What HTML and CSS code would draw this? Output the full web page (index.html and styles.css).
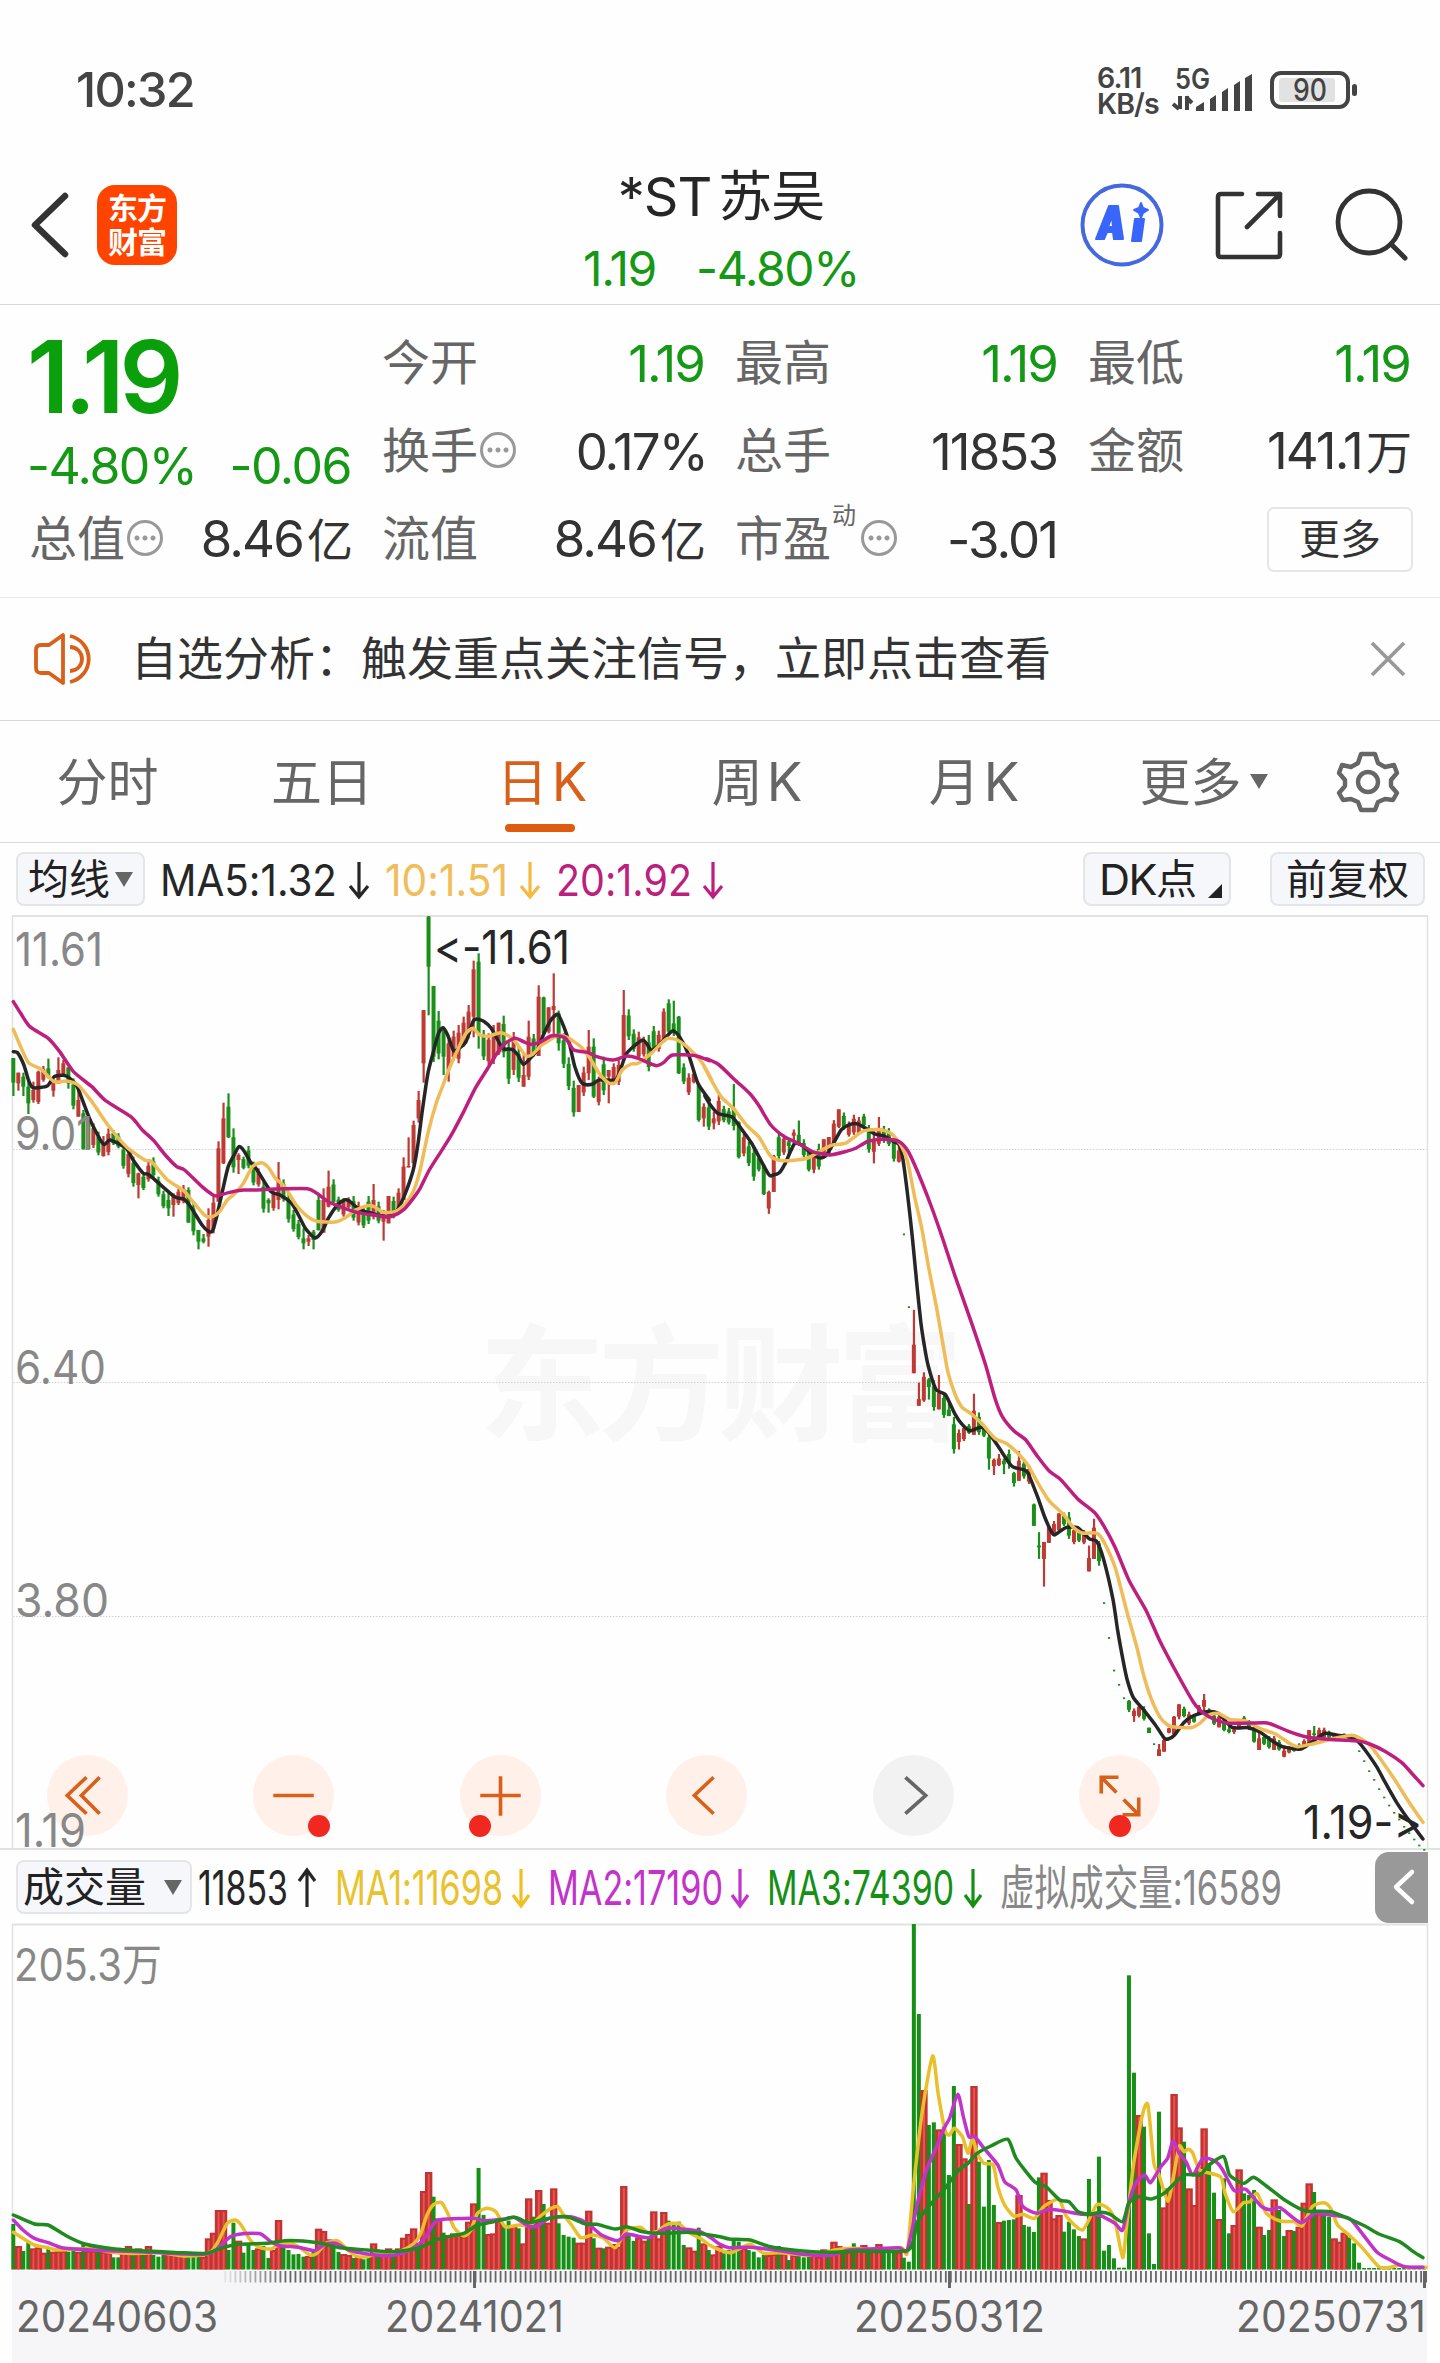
FILE: index.html
```html
<!DOCTYPE html>
<html lang="zh-CN">
<head>
<meta charset="utf-8">
<title>*ST苏吴 日K</title>
<link rel="stylesheet" href="styles.css">
</head>
<body>
<header class="status">
  <span class="clock">10:32</span>
  <div class="status-right">
    <div class="speed"><span>6.11</span><span>KB/s</span></div>
    <svg class="signal" width="82" height="60" viewBox="0 0 82 60">
      <text class="net" x="3" y="21" textLength="35" lengthAdjust="spacingAndGlyphs">5G</text>
      <path d="M8 28v13M1 36l6 5M15 42V28M14 29l6 6" fill="none" stroke="#444" stroke-width="4"/>
      <path d="M24 43v-4l8-5v9zM38 43V31l6-4v16zM50 43V24l6-4v23zM62 43V17l6-4v30zM73 43V10l7-4v37z" fill="#444"/>
    </svg>
    <svg class="battery" width="90" height="40" viewBox="0 0 90 40">
      <rect x="2" y="2" width="76" height="34" rx="9" fill="none" stroke="#444" stroke-width="4"/>
      <rect x="9" y="7" width="56" height="24" rx="3" fill="#e2e2e2"/>
      <rect x="82" y="13" width="5" height="12" rx="2.5" fill="#444"/>
      <text x="23" y="30" textLength="34" lengthAdjust="spacingAndGlyphs">90</text>
    </svg>
  </div>
</header>

<nav class="topbar">
  <div class="topbar-left">
    <svg width="40" height="68" viewBox="0 0 40 68"><path d="M35 5L5 34l30 29" fill="none" stroke="#333" stroke-width="6.5" stroke-linecap="round" stroke-linejoin="round"/></svg>
    <div class="logo"><span>东方</span><span>财富</span></div>
  </div>
  <div class="title">
    <h1><span>*ST</span><span>苏吴</span></h1>
    <p><span>1.19</span><span>-4.80%</span></p>
  </div>
  <div class="topbar-right">
    <svg width="86" height="86" viewBox="0 0 86 86">
      <circle cx="43" cy="43" r="39.5" fill="none" stroke="#4468e0" stroke-width="4"/>
      <path fill="#3966fa" stroke="#3966fa" stroke-width="2" stroke-linejoin="round" fill-rule="evenodd" d="M30 24h9l5 33h-9l-1-7h-6l-3 7h-8zM33 34l-4 11h5zM56 37h9l-3 22h-9zM62 21l2 5 5 2-5 3-2 5-2-5-5-3 5-2z"/>
    </svg>
    <svg width="72" height="72" viewBox="0 0 72 72"><path d="M29 5H8q-3 0-3 3v57q0 3 3 3h56q3 0 3-3V44M45 5h22v22M67 5L34 38" fill="none" stroke="#333" stroke-width="4.6" stroke-linecap="round" stroke-linejoin="round"/></svg>
    <svg width="76" height="76" viewBox="0 0 76 76"><circle cx="35" cy="35" r="31" fill="none" stroke="#333" stroke-width="4.8"/><path d="M57 57l14 14" stroke="#333" stroke-width="5" stroke-linecap="round"/></svg>
  </div>
</nav>

<section class="quote">
  <div class="price">1.19</div>
  <div class="change"><span>-4.80%</span><span>-0.06</span></div>
  <div class="cell cap"><span class="label">总值<i class="dots"></i></span><b>8.46<em>亿</em></b></div>
  <div class="cell c2 r1"><span class="label">今开</span><b class="down">1.19</b></div>
  <div class="cell c3 r1"><span class="label">最高</span><b class="down">1.19</b></div>
  <div class="cell c4 r1"><span class="label">最低</span><b class="down">1.19</b></div>
  <div class="cell c2 r2"><span class="label">换手<i class="dots"></i></span><b class="rate">0.17%</b></div>
  <div class="cell c3 r2"><span class="label">总手</span><b>11853</b></div>
  <div class="cell c4 r2"><span class="label">金额</span><b>141.1<em>万</em></b></div>
  <div class="cell c2 r3"><span class="label">流值</span><b>8.46<em>亿</em></b></div>
  <div class="cell c3 r3"><span class="label">市盈<sup>动</sup><i class="dots"></i></span><b>-3.01</b></div>
  <button class="more">更多</button>
</section>

<section class="notice">
  <svg width="64" height="54" viewBox="0 0 64 54"><path d="M3 18q0-5 5-5h8L30 3v48L16 41H8q-5 0-5-5zM37 4a23.5 23.5 0 0 1 0 46M37 15a12 12 0 0 1 0 24" fill="none" stroke="#d9601a" stroke-width="3.8" stroke-linejoin="round"/></svg>
  <p>自选分析：触发重点关注信号，立即点击查看</p>
  <svg width="36" height="36" viewBox="0 0 36 36"><path d="M2 2l32 32M34 2L2 34" stroke="#999" stroke-width="3.8"/></svg>
</section>

<nav class="tabs">
  <a><em>分时</em></a><a><em>五日</em></a><a class="active"><em>日</em><span>K</span></a><a><em>周</em><span>K</span></a><a><em>月</em><span>K</span></a>
  <a class="tab-more"><em>更多</em><i class="tri"></i></a>
  <svg width="64" height="64" viewBox="-32 -32 64 64"><path d="M-7-28H7L10-19L17-15L26-17L29-9L23-2V4L29 11L25 18L17 17L10 20L7 28H-7L-10 20L-17 17L-25 18L-29 11L-23 4V-2L-29-9L-26-17L-17-15L-10-19Z" fill="none" stroke="#666" stroke-width="4.4" stroke-linejoin="round"/><circle r="10" fill="none" stroke="#666" stroke-width="4.4"/></svg>
</nav>

<section class="legend ma">
  <button class="chip chip-ma">均线<i class="tri"></i></button>
  <svg width="225" height="54" viewBox="0 0 225 54"><text x="0" y="44" textLength="177" lengthAdjust="spacingAndGlyphs">MA5:1.32</text><path d="M199 10v34m-9-10l9 11 9-11"/></svg>
  <svg class="gold" width="171" height="54" viewBox="0 0 171 54"><text x="0" y="44" textLength="123" lengthAdjust="spacingAndGlyphs">10:1.51</text><path d="M145 10v34m-9-10l9 11 9-11"/></svg>
  <svg class="pink" width="180" height="54" viewBox="0 0 180 54"><text x="0" y="44" textLength="136" lengthAdjust="spacingAndGlyphs">20:1.92</text><path d="M157 10v34m-9-10l9 11 9-11"/></svg>
  <button class="chip chip-dk"><span>DK</span>点<i class="corner"></i></button>
  <button class="chip chip-fq">前复权</button>
</section>

<section class="price-chart">
  <svg width="1440" height="935" viewBox="0 915 1440 935">
    <text class="watermark" x="479" y="1431" textLength="484">东方财富</text>
    <path class="grid" d="M13 1149.5H1427M13 1382.5H1427M13 1616.5H1427"/>
    <path class="side" d="M12.5 915V1850M1427.5 915V1850"/>
    <path class="frame" d="M12 916H1428"/>
    <g id="candles"></g>
    <g id="averages" class="lines"></g>
    <g class="axis">
      <text x="15" y="966" textLength="88" lengthAdjust="spacingAndGlyphs">11.61</text>
      <text x="15" y="1150" textLength="78" lengthAdjust="spacingAndGlyphs">9.01</text>
      <text x="15" y="1384" textLength="91" lengthAdjust="spacingAndGlyphs">6.40</text>
      <text x="15" y="1617" textLength="94" lengthAdjust="spacingAndGlyphs">3.80</text>
    </g>
    <g class="mark">
      <text x="434" y="964" textLength="136" lengthAdjust="spacingAndGlyphs">&lt;-11.61</text>
      <text x="1303" y="1839" textLength="119" lengthAdjust="spacingAndGlyphs">1.19-&gt;</text>
    </g>
  </svg>
  <div class="controls">
    <button><svg viewBox="-40 -40 80 80"><path d="M-1-18L-20 0L-1 18M12-18L-6 0L12 18"/></svg></button>
    <button class="dot-right"><svg viewBox="-40 -40 80 80"><path d="M-20 0H20"/></svg></button>
    <button class="dot-left"><svg viewBox="-40 -40 80 80"><path d="M-20 0H20M0-19V20"/></svg></button>
    <button><svg viewBox="-40 -40 80 80"><path d="M7-18L-12 0L7 18"/></svg></button>
    <button class="muted"><svg viewBox="-40 -40 80 80"><path d="M-8-18L12 0L-8 18"/></svg></button>
    <button class="dot-mid"><svg viewBox="-40 -40 80 80"><path d="M-1-18H-18V-2M-18-18L-3-3M3 19H19V2M19 19L4 4"/></svg></button>
  </div>
  <svg class="low-label" width="80" height="44" viewBox="0 0 80 44"><text x="0" y="40" textLength="71" lengthAdjust="spacingAndGlyphs">1.19</text></svg>
</section>

<section class="legend vol">
  <button class="chip chip-vol">成交量<i class="tri"></i></button>
  <svg width="137" height="54" viewBox="0 0 137 54"><text x="0" y="45" textLength="90" lengthAdjust="spacingAndGlyphs">11853</text><path d="M109 47V10m-8 11l8-11 8 11"/></svg>
  <svg class="yellow" width="214" height="54" viewBox="0 0 214 54"><text x="0" y="45" textLength="168" lengthAdjust="spacingAndGlyphs">MA1:11698</text><path d="M186 9v37m-8-11l8 11 8-11"/></svg>
  <svg class="violet" width="219" height="54" viewBox="0 0 219 54"><text x="-1" y="45" textLength="175" lengthAdjust="spacingAndGlyphs">MA2:17190</text><path d="M191 9v37m-8-11l8 11 8-11"/></svg>
  <svg class="green" width="232" height="54" viewBox="0 0 232 54"><text x="-1" y="45" textLength="187" lengthAdjust="spacingAndGlyphs">MA3:74390</text><path d="M205 9v37m-8-11l8 11 8-11"/></svg>
  <svg class="grey" width="285" height="54" viewBox="0 0 285 54"><text x="0" y="45" textLength="282" lengthAdjust="spacingAndGlyphs">虚拟成交量:16589</text></svg>
  <button class="handle"><svg width="24" height="36" viewBox="0 0 24 36"><path d="M20 3L4 18l16 15" fill="none" stroke="#fff" stroke-width="4.5" stroke-linecap="round" stroke-linejoin="round"/></svg></button>
</section>

<section class="volume-chart">
  <svg width="1440" height="347" viewBox="0 1924 1440 347">
    <path class="side" d="M12.5 1924V2270M1427.5 1924V2270"/>
    <path class="frame" d="M12 1924.5H1428"/>
    <g id="volumes"></g>
    <g id="volume-averages" class="lines"></g>
    <g class="axis small"><text x="14" y="1981" textLength="148" lengthAdjust="spacingAndGlyphs">205.3万</text></g>
  </svg>
</section>

<footer class="dates">
  <svg width="1415" height="92" viewBox="12 2271 1415 92">
    <g id="ticks"></g>
    <path d="M474.5 2271v17M949.5 2271v17M1424.5 2271v17" stroke="#666" stroke-width="3"/>
    <text x="16" y="2332" textLength="202" lengthAdjust="spacingAndGlyphs">20240603</text>
    <text x="385" y="2332" textLength="179" lengthAdjust="spacingAndGlyphs">20241021</text>
    <text x="854" y="2332" textLength="191" lengthAdjust="spacingAndGlyphs">20250312</text>
    <text x="1236" y="2332" textLength="190" lengthAdjust="spacingAndGlyphs">20250731</text>
  </svg>
</footer>
<script src="chart.js"></script>
</body>
</html>
```

FILE: styles.css
```css
* { box-sizing: border-box; }
body {
  margin: 0;
  width: 1440px;
  height: 2363px;
  overflow: hidden;
  background: #fefefe;
  color: #333;
  font-family: Inter, "Noto Sans CJK SC", sans-serif;
  font-weight: 400;
  font-feature-settings: "calt" 0;
}
svg { display: block; flex: none; overflow: visible; }
button { font: inherit; color: inherit; border: 0; padding: 0; background: none; }
h1, p { margin: 0; font-weight: 400; }
i, em, b { font-style: normal; font-weight: 400; }

.status { height: 140px; display: flex; justify-content: space-between; padding: 60px 80px 0 76px; color: #444; }
.clock { font-size: 48.5px; line-height: 60px; letter-spacing: -1.7px; font-weight: 500; }
.status-right { display: flex; }
.speed { display: flex; flex-direction: column; width: 75px; padding-top: 5px; font-size: 28.5px; font-weight: 600; line-height: 25.5px; letter-spacing: -.9px; }
.signal { height: 60px; margin-top: 8px; margin-right: 16px; }
.net { font-size: 28px; font-weight: 600; fill: #444; }
.battery { margin-top: 11px; }
.battery text { font-size: 31px; font-weight: 500; fill: #444; }

.topbar { height: 165px; display: grid; grid-template-columns: 1fr auto 1fr; border-bottom: 1px solid #d8d8d8; }
.topbar-left { display: flex; align-items: center; gap: 27px; padding: 6px 0 0 30px; }
.logo { width: 80px; height: 80px; border-radius: 18px; background: #ff4400; color: #fff; display: flex; flex-direction: column; align-items: center; justify-content: center; font-size: 30px; line-height: 34px; font-weight: 700; letter-spacing: -1px; }
.title { display: flex; flex-direction: column; align-items: center; padding: 22px 0 0 2px; }
.title h1 { display: flex; gap: 7px; font-size: 54px; line-height: 70px; letter-spacing: -1px; color: #262626; }
.title p { display: flex; gap: 40px; font-size: 48px; line-height: 60px; margin-top: 7px; letter-spacing: -1.4px; color: #159815; }
.topbar-right { display: flex; align-items: center; justify-content: flex-end; padding: 5px 30px 0 0; }
.topbar-right svg:nth-child(2) { margin-left: 48px; }
.topbar-right svg:nth-child(3) { margin-left: 49px; }

.quote { height: 293px; display: grid; grid-template-columns: 321px 321px 321px 321px; grid-template-rows: 88px 88px 88px; column-gap: 32px; padding: 14px 0 0 30px; border-bottom: 1px solid #e9e9e9; }
.price { grid-area: 1 / 1; margin-left: -3px; font-size: 100px; line-height: 116px; font-weight: 600; letter-spacing: -5px; color: #0b9f0b; }
.change { grid-area: 2 / 1; display: flex; justify-content: space-between; align-items: center; margin-left: -3px; font-size: 50px; letter-spacing: -1.5px; color: #159815; padding-top: 30px; }
.cell { display: flex; justify-content: space-between; align-items: center; white-space: nowrap; }
.cell b { font-size: 51px; line-height: 60px; letter-spacing: -1.9px; padding-top: 1px; }
.cell em { font-size: 46px; margin-left: 4px; }
.cell .rate { margin-right: -3px; }
.cell .down { color: #159815; }
.label { display: flex; align-items: center; font-size: 48px; line-height: 60px; color: #666; margin-top: -1px; margin-left: -1px; }
.label sup { align-self: flex-start; font-size: 24px; line-height: 24px; width: 27px; margin-left: 1px; margin-top: -5px; }
.dots { width: 36px; height: 36px; margin: -2px 0 0 2px; border: 3px solid #999; border-radius: 50%; background: radial-gradient(circle at 7px 15px, #999 2px, transparent 3px), radial-gradient(circle at 15px 15px, #999 2px, transparent 3px), radial-gradient(circle at 23px 15px, #999 2px, transparent 3px); }
.cap { grid-area: 3 / 1; }
.r1 { grid-row: 1; } .r2 { grid-row: 2; } .r3 { grid-row: 3; }
.c2 { grid-column: 2; } .c3 { grid-column: 3; } .c4 { grid-column: 4; }
.more { grid-area: 3 / 4; justify-self: end; align-self: center; margin-right: -3px; width: 146px; height: 65px; border: 2px solid #e6e6e6; border-radius: 7px; font-size: 41px; line-height: 58px; color: #333; }

.notice { height: 123px; display: flex; align-items: center; padding: 0 34px 0 33px; border-bottom: 1px solid #d8d8d8; }
.notice p { flex: 1; margin: -2px 0 0 34px; font-size: 46px; line-height: 60px; }

.tabs { height: 122px; display: grid; grid-template-columns: 215px 214px 226px 204px 230px 229px 122px; align-items: center; border-bottom: 1px solid #d8d8d8; font-size: 51px; color: #666; }
.tabs a { position: relative; display: flex; justify-content: center; align-items: center; height: 121px; white-space: nowrap; }
.tabs em { margin-top: -5px; }
.tabs a span { margin-left: 4px; font-size: 53px; }
.tabs .active { color: #d9601a; }
.tabs .active::after { content: ""; position: absolute; left: 76px; bottom: 10px; width: 70px; height: 8px; border-radius: 4px; background: #de5c10; }
.tri { width: 0; height: 0; border: 9px solid transparent; border-top: 15px solid #666; border-bottom: 0; }
.tab-more .tri { margin-left: 8px; }
.tabs svg { margin-left: 18px; }

.legend { display: flex; align-items: center; }
.legend svg text { font-size: 43.5px; fill: #262626; }
.legend svg path { fill: none; stroke: #262626; stroke-width: 3.2; }
.chip { height: 54px; display: flex; align-items: center; background: #f6f7fa; border: 2px solid #e4e5e8; border-radius: 8px; font-size: 41px; line-height: 48px; color: #222; white-space: nowrap; }
.ma { height: 72px; padding-left: 16px; }
.chip-ma { width: 129px; padding-left: 10px; margin-right: 15px; }
.chip .tri { margin-left: 5px; }
.chip-dk { width: 148px; margin-left: auto; padding-left: 14px; }
.chip-dk span { font-size: 43px; letter-spacing: -1.5px; }
.corner { margin-left: 11px; margin-top: 24px; border-left: 14px solid transparent; border-bottom: 14px solid #222; }
.chip-fq { width: 155px; margin-left: 39px; margin-right: 15px; padding-left: 14px; }
.legend .gold text { fill: #f0bd58; } .legend .gold path { stroke: #f5b942; }
.legend .pink text { fill: #bd1f7e; } .legend .pink path { stroke: #bd1f7e; }

.price-chart { position: relative; height: 935px; border-bottom: 2px solid #e2e2e2; }
.grid { stroke: #d2d2d2; stroke-width: 1; stroke-dasharray: 1.5 1.5; }
.side { stroke: #e2e2e2; stroke-width: 1.5; }
.frame { stroke: #e2e2e2; stroke-width: 2; }
.watermark { font-family: "Noto Sans CJK SC", sans-serif; font-size: 126px; font-weight: 700; fill: #f7f7f7; }
.axis text, .low-label text { font-size: 47px; fill: #888; }
.axis.small text { font-size: 44.5px; }
.mark text { font-size: 47px; fill: #262626; }
.lines path { fill: none; stroke-width: 3.5; stroke-linejoin: round; stroke-linecap: round; }
.controls { position: absolute; left: 47px; top: 840px; display: flex; gap: 125.4px; }
.controls button { position: relative; width: 81px; height: 81px; border-radius: 50%; background: #fff1e9; }
.controls svg { width: 81px; height: 81px; fill: none; stroke: #d9601a; stroke-width: 3.6; }
.controls .muted { background: #f2f2f2; }
.controls .muted svg { stroke: #666; }
.controls [class^="dot"]::after { content: ""; position: absolute; width: 22px; height: 22px; border-radius: 50%; background: #f02820; top: 60px; }
.controls .dot-right::after { left: 55px; }
.controls .dot-left::after { left: 9px; }
.controls .dot-mid::after { left: 30px; }
.low-label { position: absolute; left: 15px; top: 892px; }

.vol { height: 74px; padding-left: 16px; }
.vol svg text { font-size: 47.5px; }
.chip-vol { width: 176px; padding-left: 5px; margin-right: 6px; }
.chip-vol .tri { margin-left: 18px; }
.legend .yellow text { fill: #e9c22f; } .legend .yellow path { stroke: #f0c020; }
.legend .violet text { fill: #c233ca; } .legend .violet path { stroke: #c233ca; }
.legend .green text { fill: #159015; } .legend .green path { stroke: #159015; }
.legend .grey text { fill: #888; }
.handle { margin-left: auto; margin-right: 12px; width: 53px; height: 71px; border-radius: 14px 0 0 14px; background: #999; display: flex; align-items: center; padding-left: 17px; }
.legend .handle svg path { stroke: #fff; stroke-width: 4.5; }

.volume-chart { height: 347px; }
.dates { height: 92px; margin: 0 13px 0 12px; background: #f6f6f9; }
.dates text { font-size: 43.5px; fill: #666; }
```

FILE: chart.js
```js
const NS = 'http://www.w3.org/2000/svg';
const RED = '#be3a34', GREEN = '#1a8f1a';
const barX = i => 13.3 + 5.003 * i;

function add(parent, tag, attrs) {
  const el = document.createElementNS(NS, tag);
  for (const k in attrs) el.setAttribute(k, attrs[k]);
  document.getElementById(parent).appendChild(el);
}

// Scales: stored value -> chart units.
const A = { x: 0, y: 900, kx: 2.178, ky: 3 };
const B = { x: 700, y: 1050, kx: 2.119, ky: 2.24 };
const C = { x: 720, y: 1660, kx: 2.178, ky: 3 };
const V1 = { x: 0, y: 2100, kx: 2.178, ky: 3 };
const V2 = { x: 720, y: 1900, kx: 2.178, ky: 3 };

// Daily bars: direction, high-low, optional body range.
const days = [
  [A, `g474-588:474-548 r518-572:518-550 g518-588:530-560 g540-642:560-610 r545-608:570-600 r512-612:515-606 r498-545 g476-535:505-532 r530-590:540-572 r472-552:510-550 r480-528:490-525 g502-566:502-550
  g535-628 r560-650:600-650 g630-748:640-748 g650-748:660-748 r670-744 g695-766 r708-770:730-768 r685-766 g690-735 g700-745 g735-806 r745-832 g770-860 r818-895:820-855 g820-870 r785-845 g772-832 g830-890
  g872-925 g875-948:900-925 r880-950:885-915 r865-915 r855-910 g862-968:870-968 g905-1006 g990-1048:990-1025 g1002-1030:1015-1025 r925-1040:960-1010 r885-1000 r724-905:745-905 r608-792:655-790 g580-714:620-712 g685-818 r760-822:765-780 g770-808 g738-805 g785-856 r805-860
  g840-938 g895-938:900-910 r865-932 r786-928:835-900 g838-905 g880-968 g930-995 g960-1018 g985-1048:1015-1030 r1005-1038:1015-1025 g990-1048:995-1020 g880-992:900-990 r865-998:900-998 r812-922:860-920 g838-915 g890-935 r895-950 r892-925 g888-962 r905-976
  g920-984 g888-972 r852-958:900-950 g905-970 r930-1022:940-965 r888-970:888-970 g890-955 r865-930 r772-900:800-900 r712-802:798-802 r662-800:675-790 r573-668:600-655 r330-548:330-490 g48-346:50-200 g258-486:258-470 g333-478 g380-525:390-470 r420-545:430-510 r392-482 r375-490
  r350-440 r315-415 r182-412:208-350 g160-446:185-400 g390-480 r400-495 r375-492 r368-465:368-460 g347-472 g420-552 r396-525 g440-546 r460-560:525-560 r362-540:410-530 g402-470 r256-468:290-468 g290-405:292-400 r322-400:322-395 r220-408:318-330 g332-452:340-430
  g400-504 g472-570 g542-650 r555-636:555-636 r500-588 r390-540:440-520 g415-594:440-590 r530-616 g470-585 r510-610:510-530 r490-545 r480-555 r270-465:345-465 g328-420 g388-455 r395-480 r410-470 g405-514 g378-456 r392-455 r325-425:335-425
  g298-400:310-395 g302-408:370-400 g348-522:350-520 g490-552 r520-585 r515-550 g550-665:555-660 r610-680:620-655 g605-690 r635-688:655-670 r585-675`],
  [B, `g125-162 g130-167 g76-180:130-170 g160-243:162-240 r185-238 g205-260 g215-293 g235-272 g255-325:258-323 r315-367:318-355 r235-318:238-318 g183-245 r190-235 g200-240:205-215 r178-205:185-192 g158-215:190-212 g200-240 g220-272:222-268 r228-276:228-268 g210-268
  r200-240:200-240 r195-232:195-232 r157-215:165-210 r133-175:133-172 g140-178 r160-194 r145-190 r150-190 g143-172 g168-230 r180-254:200-228 r150-215:180-210 g170-208 g175-215 g195-250 r205-252:225-250 g411-415:411-415 g574-578:574-578 r582-724:660-724 r745-797:782-797
  r722-788:732-785 g735-783:738-755 g740-808 r728-805:768-805 g768-824 g790-820:806-820 g822-904 r850-895:858-878 r840-876 g838-860 r770-862:808-862 g812-862 g840-867 g862-940:868-915 r915-952:918-932 r905-932:915-930 g915-950:920-928 g895-938:905-925 g945-978:948-970 r898-965:920-965
  g918-960 r930-972 g1016-1066:1018-1066 g1080-1140:1110-1114 r1102-1202:1102-1140 r1068-1104:1068-1104 r1055-1088 r1038-1076:1038-1076 g1036-1066 g1035-1095 r1068-1107 g1075-1102 r1075-1107 r1110-1168:1138-1168 r1050-1140:1070-1140 g1100-1155:1105-1145 g1237-1241:1237-1241 g1315-1319:1315-1319 g1388-1392:1388-1392
  g1420-1424:1420-1424 g1450-1454:1450-1454 g1456-1483:1458-1478 r1475-1505:1480-1492 r1465-1495 g1470-1502 g1518-1530:1518-1530 g1553-1557:1553-1557`],
  [C, `r252-288:268-288 r235-275:240-275 r203-220:205-218 r168-222:170-222 r133-178:133-170 g140-172 r155-195 g165-188 r135-165 r102-160:120-140 g145-165 g160-195 r165-202:170-202 g180-214 g190-220:208-216 r205-222:208-216 r180-205 g168-195 g180-210 g195-248:210-245 r215-270:235-270
  g225-255 g228-266 r228-270:235-270 g240-272 r262-292:272-290 r258-280 g255-275 g250-272 r238-262 r210-250:210-250 g198-235:220-225 r203-240 r203-235 g212-235 r222-235 g225-238 g220-235 r228-240 g225-245 g271-276 g301-306 g331-336 g357-362 g385-390 g410-415 g434-439 g456-461 g476-481 g498-503 g517-522 g536-541 g554-559 g567-572`]
];

let n = 0;
for (const [s, text] of days) {
  for (const day of text.trim().split(/\s+/)) {
    const [hi, lo, top, bottom] = day.slice(1).split(/[-:]/).map(Number);
    const Y = v => s.y + v / s.ky;
    const t = top === undefined ? hi + (lo - hi) * .2 : top;
    const b = bottom === undefined ? lo - (lo - hi) * .12 : bottom;
    const fill = day[0] === 'r' ? RED : GREEN, x = barX(n++), tiny = lo - hi < 7;
    add('candles', 'rect', { x: x - 1, y: Y(hi), width: 2.2, height: Y(lo) - Y(hi), fill });
    if (!tiny) add('candles', 'rect', { x: x - 2, y: Y(t), width: 4, height: Math.max(1.5, Y(b) - Y(t)), fill });
  }
}

function curve(parent, color, parts) {
  const p = [];
  for (const [s, text] of parts)
    for (const pair of text.trim().split(/\s+/)) {
      const [x, y] = pair.split(',').map(Number);
      p.push([s.x + x / s.kx, s.y + y / s.ky]);
    }
  let d = 'M' + p[0];
  for (let i = 0; i < p.length - 1; i++) {
    const a = p[Math.max(i - 1, 0)], b = p[i], c = p[i + 1], e = p[Math.min(i + 2, p.length - 1)];
    const k = 9;
    d += `C${b[0] + (c[0] - a[0]) / k} ${b[1] + (c[1] - a[1]) / k} ${c[0] - (e[0] - b[0]) / k} ${c[1] - (e[1] - b[1]) / k} ${c[0]} ${c[1]}`;
  }
  add(parent, 'path', { d, stroke: color });
}

curve('averages', '#262626', [
  [A, '29,455 38,458 52,495 62,540 72,563 103,558 118,530 138,526 152,535 168,560 185,620 198,665 225,732 240,720 275,745 290,780 312,820 325,825 380,890 400,897 415,920 440,975 455,995 463,992 472,950 485,870 497,800 510,765 520,740 530,750 545,785 560,810 590,875 610,885 635,910 650,945 665,985 683,1012 692,1010 705,985 715,955 735,915 750,900 760,902 775,920 795,935 810,940 830,948 850,948 865,930 880,890 900,810 910,735 920,630 932,520 943,460 955,400 965,383 975,405 988,452 1000,445 1015,425 1030,365 1038,357 1055,365 1070,385 1090,435 1098,447 1115,448 1128,465 1140,493 1158,470 1170,450 1185,400 1200,360 1215,343 1228,380 1240,430 1252,500 1268,550 1290,553 1305,540 1340,540 1350,515 1365,460 1400,420 1418,450 1435,435 1455,405 1466,392 1480,410 1500,465 1520,550 1545,600'],
  [B, '10,102 20,120 38,142 68,150 90,180 110,210 145,278 155,280 168,275 180,255 200,210 215,213 240,235 255,242 268,235 285,205 300,178 320,166 335,166 350,175 370,188 390,193 410,205 422,212 430,245 440,325 450,420 460,530 468,610 475,660 483,705 500,760 520,772 540,815 555,838 572,853 595,845 610,855 630,885 655,925 665,935 685,940 695,948 715,1000 730,1045 745,1080 752,1086 775,1070 800,1070 825,1095 840,1100 855,1140 875,1230 885,1300 897,1370 905,1410 918,1450 940,1478 965,1512'],
  [C, '968,235 978,236 990,225 1010,188 1030,168 1060,155 1085,160 1115,202 1150,203 1175,215 1200,240 1225,260 1262,268 1275,260 1295,240 1318,220 1345,226 1375,232 1390,245 1405,270 1430,320 1450,370 1475,430 1500,480 1531,537']
]);
curve('averages', '#efbc57', [
  [A, '29,388 45,440 62,488 90,508 118,545 145,543 170,555 200,605 235,675 275,740 315,780 330,785 365,840 400,872 420,905 445,945 462,950 478,935 495,900 512,880 530,850 550,800 570,788 585,803 600,835 620,860 645,915 670,950 690,964 730,966 750,955 775,930 800,917 815,920 835,937 860,935 880,915 900,875 915,810 932,700 950,610 965,555 980,500 1000,440 1015,400 1030,385 1045,405 1065,408 1090,398 1110,410 1125,430 1145,467 1160,463 1180,435 1215,407 1235,412 1265,440 1285,475 1305,520 1325,548 1340,548 1355,510 1375,492 1390,490 1420,458 1440,430 1455,415 1475,420 1500,445 1530,490 1550,540'],
  [B, '8,35 20,60 45,105 70,130 100,170 125,195 150,238 175,248 225,243 262,222 280,213 310,208 345,182 380,178 405,187 425,212 440,250 455,330 470,400 485,490 500,570 515,660 525,720 540,770 555,800 575,815 600,840 625,870 650,882 675,905 695,930 715,968 740,1010 770,1040 790,1068 810,1082 840,1082 855,1100 880,1160 905,1260 925,1335 940,1400 955,1450 975,1495'],
  [C, '975,195 985,200 1025,203 1045,190 1065,165 1085,160 1110,178 1145,183 1175,205 1210,222 1240,250 1258,260 1290,252 1320,242 1350,232 1375,226 1390,232 1415,255 1440,300 1470,360 1500,425 1531,487']
]);
curve('averages', '#bd1f7e', [
  [A, '29,305 45,340 65,380 105,415 130,455 160,515 200,560 230,602 285,650 310,690 335,722 360,765 385,800 402,810 440,860 465,886 475,887 500,877 530,870 560,870 600,867 670,866 690,880 715,905 745,922 780,938 815,945 835,950 855,948 880,928 900,895 915,865 935,810 965,745 985,700 1010,635 1035,565 1060,510 1080,465 1100,430 1122,415 1140,425 1155,433 1175,427 1200,408 1215,407 1232,415 1250,450 1280,457 1300,470 1335,480 1365,468 1390,475 1410,487 1430,497 1445,488 1465,465 1515,467 1545,482'],
  [B, '15,20 40,33 75,68 105,97 125,125 150,168 180,195 210,210 240,228 275,235 310,227 330,220 355,205 385,200 420,204 440,225 460,270 490,350 515,425 540,505 575,610 605,705 625,780 640,820 665,853 690,873 715,910 740,943 765,963 800,1005 835,1035 855,1065 880,1115 910,1190 945,1255 975,1325 1010,1395 1045,1460'],
  [C, '1045,150 1065,170 1090,185 1115,190 1185,188 1200,192 1240,215 1275,230 1310,236 1350,240 1390,243 1415,252 1450,275 1485,308 1510,345 1531,377']
]);

// Daily volumes: direction and bar top.
const volumes = [
  [V1, `g372 r438 g453 g425 r445 r442 r458 g445 r455 r452 r452 g455 g452 r455 g430 r452 r452 g455 r455 r458 g472 g472 r455 r438 g458 r445 g455 r438 g465 g470 g465 r462 r460 r460 r462 g465 g468 g465 r470 r415 r398 r330 r330 g450 g368 r422 g458 g432 g450 r445 g438 g474 r450 r360 g432 g450 g463 g462 g470 r468 g450 r386 r393 r418 g430 g456 r462 r465 g474 r470 g478 g468 r430 g458 r455 r445 g455 r445 r413 r402 r385 g430 r273 r216 g290 r355 g398 r405 r400 r402 r410 r365 r310 g204 g345 r402 r400 r362 g375 g362 r378 g385 r430 r295 g350 r270 g312 r368 r265 g370 g405 g410 g413 r428 r428 r332 g415 r443 g445 r440 r432 r440 r258 g405 g423 r412 r422 g410 r334 r415 r336 g362 g375 g365 g435 r442 r452 g383 r430 g450 r463 r438`],
  [V2, `g1060 g1050 g1015 g1025 r1045 g1050 g1055 g1072 g1065 r1065 r1062 g1038 r1060 g1080 r1065 g1068 g1072 g1070 r1065 r1070 r1048 g1055 r1025 r1038 g1052 r1055 g1030 r1042 r1035 g1048 r1045 r1032 g1050 g1048 g1050 r1055 g1073 g1085 g72 g342 r570 g675 g667 r688 g680 g825 g558 r732 r775 g912 r558 g785 g920 g780 g915 r966 g962 g960 g958 r885 g975 g980 g996 g832 r818 r900 r955 r945 g995 g965 g988 g1008 r1015 g837 r935 g770 g1052 g1035 g1075 g1103 g1103 g226 g518 r645 g680 g1000 g1092 g635 r922 r865 r582 r682 g725 r865 r915 r802 r685 g790 g878 r957 g835 g1000 r975 r808 g880 g885 g870 r980 g1005 g990 r898 g930 g1008 r990 g993 r980 r908 r850 g876 r940 g935 g950 r1015 r1025 r998 g1012 g1030 g1088 g1104 g1104 g1104 g1104 g1103 g1103 g1104 g1104 g1104 g1104 g1104 g1104 g1104`]
];
let v = 0;
for (const [s, text] of volumes) {
  for (const bar of text.split(' ')) {
    const y = s.y + bar.slice(1) / s.ky, x = barX(v++), h = 2269.5 - y;
    if (bar[0] === 'r') {
      add('volumes', 'rect', { x: x - 3.6, y, width: 7.4, height: h, fill: '#c23332' });
      add('volumes', 'rect', { x: x - .8, y: y + 2, width: 2, height: Math.max(0, h - 2), fill: '#e85550' });
    } else {
      add('volumes', 'rect', { x: x - 2, y, width: 4, height: h, fill: '#159015' });
    }
  }
}

curve('volume-averages', '#e9c02c', [
  [V1, '29,397 50,415 75,435 100,442 125,450 160,448 200,445 235,455 275,460 310,460 350,458 400,468 440,465 460,455 475,425 495,370 512,360 525,375 545,420 565,442 590,447 610,432 635,430 655,445 675,465 690,460 710,430 735,422 750,440 775,468 800,470 820,460 850,462 875,452 900,432 915,405 930,345 945,313 962,308 975,340 990,385 1010,408 1025,392 1040,340 1060,325 1080,335 1100,380 1130,375 1155,375 1180,345 1200,325 1215,320 1225,340 1245,375 1265,413 1290,405 1315,415 1340,443 1365,390 1395,382 1410,398 1430,395 1455,372 1480,372 1500,398 1525,415 1545,435'],
  [V2, '0,1050 25,1058 65,1033 95,1060 130,1058 180,1065 210,1063 250,1050 285,1045 340,1048 395,1043 408,1058 420,880 440,640 463,468 475,580 490,690 500,705 510,685 528,710 540,760 550,715 560,760 575,790 595,795 605,860 620,915 640,948 660,943 685,955 705,920 738,898 755,950 790,990 820,915 845,925 860,960 877,1073 885,985 900,800 920,645 932,615 945,790 955,820 975,903 985,850 1000,740 1010,755 1020,748 1030,760 1045,810 1090,830 1100,880 1118,935 1140,908 1155,905 1170,880 1190,940 1220,963 1250,965 1268,978 1290,920 1315,908 1330,925 1345,975 1370,1005 1400,1045 1435,1100 1460,1102 1480,1095 1500,1102 1538,1102']
]);
curve('volume-averages', '#c233ca', [
  [V1, '29,360 50,390 75,415 105,428 135,443 200,450 250,453 300,455 350,458 400,462 445,463 470,450 500,412 520,403 550,400 570,403 590,425 610,437 650,442 685,452 705,435 730,430 760,450 800,462 850,467 880,458 910,435 930,405 945,370 965,358 1030,355 1055,362 1095,358 1120,352 1150,378 1170,378 1195,355 1225,350 1250,352 1280,370 1310,405 1345,422 1365,402 1395,410 1415,412 1450,385 1490,388 1525,395 1550,415'],
  [V2, '0,1033 20,1043 65,1042 130,1052 180,1063 240,1066 280,1050 340,1046 390,1043 408,1050 430,910 450,810 470,745 490,680 500,655 518,583 530,650 542,710 555,710 575,745 605,795 620,845 645,870 660,920 690,940 720,928 790,943 825,945 860,970 877,990 890,910 905,850 925,825 938,848 960,800 975,775 987,722 1000,760 1015,785 1030,825 1052,775 1080,785 1095,810 1120,872 1145,868 1180,920 1200,930 1220,923 1265,968 1295,940 1330,945 1370,955 1390,985 1430,1055 1460,1080 1490,1100 1531,1102']
]);
curve('volume-averages', '#1f8a1f', [
  [V1, '29,345 75,372 105,375 145,408 185,432 250,447 320,453 390,458 450,460 480,445 520,433 580,430 620,422 660,423 700,430 740,443 800,450 850,455 890,450 920,440 945,422 975,410 1010,400 1040,375 1070,367 1120,352 1150,368 1180,360 1215,350 1240,352 1275,372 1300,373 1340,387 1365,380 1400,395 1450,400 1500,397'],
  [V2, '0,1010 20,1017 65,1020 110,1040 180,1053 240,1057 300,1053 410,1050 430,965 460,910 490,865 520,810 540,790 560,760 590,738 627,718 645,775 685,845 710,860 740,900 760,905 780,935 805,943 830,937 850,943 877,965 890,910 910,890 940,897 970,877 1010,825 1045,825 1065,795 1097,770 1110,825 1140,850 1162,832 1190,858 1230,900 1275,933 1330,935 1400,975 1435,1002 1480,1025 1510,1055 1531,1073']
]);

for (let x = 224.5; x < 1427; x += 5.003)
  add('ticks', 'rect', { x, y: 2271, width: 1.8, height: 11.5, fill: '#666', opacity: Math.min(1, (x - 215) / 70) });
```
